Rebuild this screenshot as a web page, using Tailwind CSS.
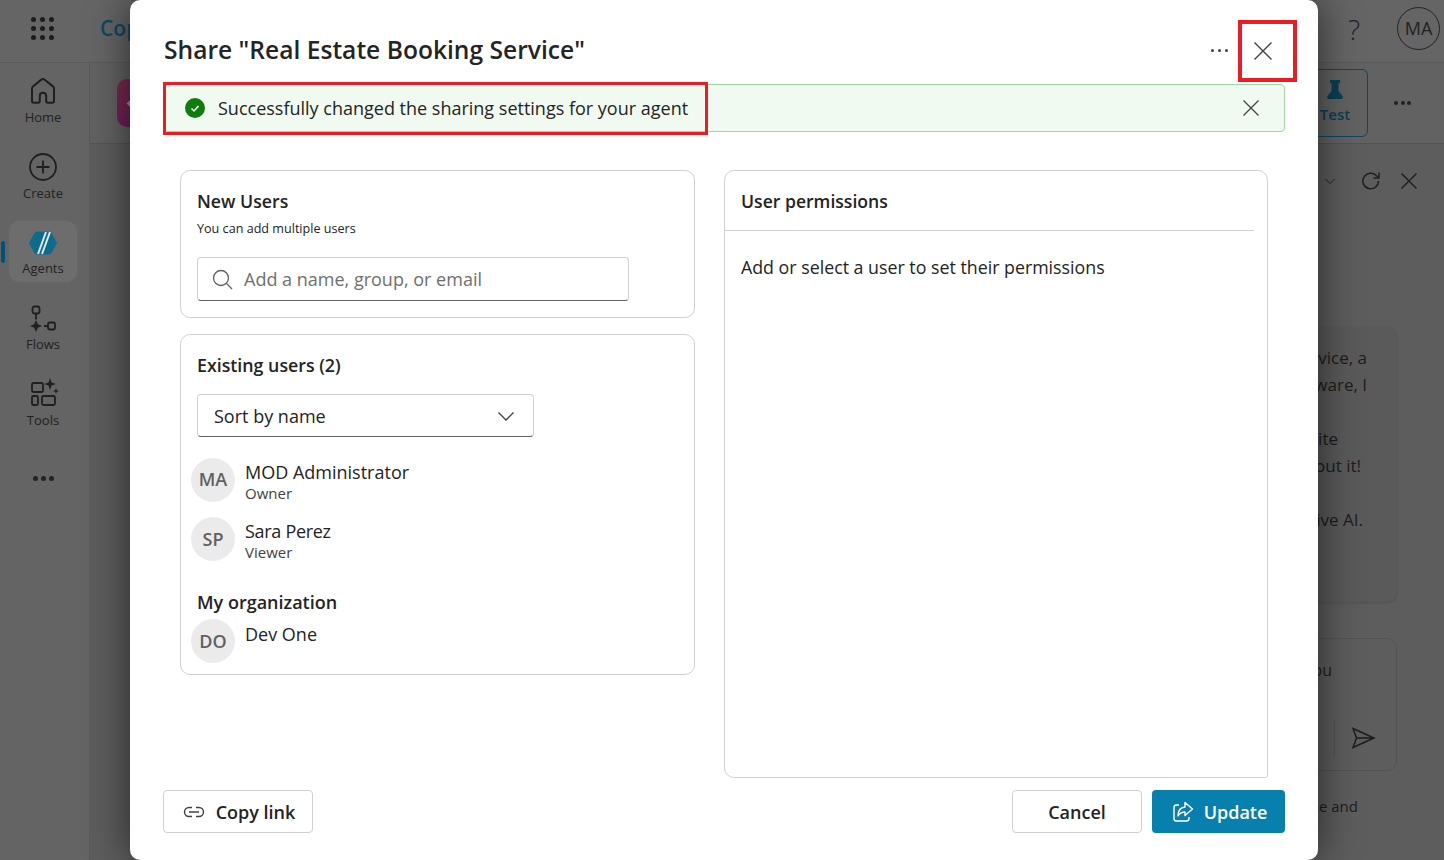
<!DOCTYPE html>
<html lang="en">
<head>
    <meta charset="UTF-8">
    <meta name="viewport" content="width=device-width, initial-scale=1.0">
    <title>Share agent</title>
    <script src="https://cdn.jsdelivr.net/npm/@tailwindcss/browser@4"></script>
</head>
<body class="bg-[#5c5d5c] font-['Open_Sans',sans-serif] text-[#242424]">
<div class="relative w-[1444px] h-[860px] overflow-hidden">

    <!-- App behind the dialog -->
    <div class="flex flex-col h-full">
        <header class="h-[63px] flex items-center bg-[#646564] border-b border-[#5a5b5a] pl-[31px] pr-[4px] pb-[5px] shrink-0">
            <div class="grid grid-cols-3 gap-[4px] w-[23px]">
                <span class="size-[5px] rounded-full bg-[#1c1c1c]"></span><span class="size-[5px] rounded-full bg-[#1c1c1c]"></span><span class="size-[5px] rounded-full bg-[#1c1c1c]"></span>
                <span class="size-[5px] rounded-full bg-[#1c1c1c]"></span><span class="size-[5px] rounded-full bg-[#1c1c1c]"></span><span class="size-[5px] rounded-full bg-[#1c1c1c]"></span>
                <span class="size-[5px] rounded-full bg-[#1c1c1c]"></span><span class="size-[5px] rounded-full bg-[#1c1c1c]"></span><span class="size-[5px] rounded-full bg-[#1c1c1c]"></span>
            </div>
            <span class="ml-[46px] text-[21px] font-semibold text-[#0b4a63]">Cop</span>
            <span class="ml-auto text-[28px] font-light text-[#222]">?</span>
            <span class="ml-[37px] size-[43px] rounded-full border border-[#222] flex items-center justify-center text-[18px] text-[#222]">MA</span>
        </header>
        <div class="flex flex-1 min-h-0">
            <nav class="relative w-[90px] shrink-0 bg-[#636463] border-r border-[#595a59] flex flex-col items-center pt-[13px] pr-[3px] text-[13px] text-[#222]">
                <div class="h-[76px] flex flex-col items-center">
                    <svg class="size-[30px]" viewBox="0 0 30 30" fill="none" stroke="#1f1f1f" stroke-width="2"><path d="M4 25V12.500c0-.9.4-1.600 1-2.100l8-6.500c1.200-1 2.800-1 4 0l8 6.500c.6.5 1 1.200 1 2.100V25c0 1-.8 1.800-1.800 1.800H20c-1 0-1.800-.8-1.800-1.800V20c0-1.800-1.400-3.200-3.200-3.200S11.800 18.200 11.800 20v5c0 1-.8 1.800-1.800 1.800H5.800C4.800 26.800 4 26 4 25z"/></svg>
                    <span class="mt-[2px]">Home</span>
                </div>
                <div class="h-[68px] flex flex-col items-center">
                    <svg class="size-[30px]" viewBox="0 0 30 30" fill="none" stroke="#1f1f1f" stroke-width="1.800"><circle cx="15" cy="15" r="13"/><path d="M15 8.500v13M8.500 15h13"/></svg>
                    <span class="mt-[2px]">Create</span>
                </div>
                <div class="absolute left-[1px] top-[178px] w-[4px] h-[22px] rounded-full bg-[#03507a]"></div>
                <div class="w-[70px] h-[63px] shrink-0 rounded-[12px] bg-[#6c6d6c] border border-[#666766] flex flex-col items-center pt-[10px]">
                    <svg class="w-[28px] h-[24px] shrink-0" viewBox="0 0 28 24"><path d="M7.500 .5h13a2 2 0 0 1 1.700 1l5.300 9.500a2 2 0 0 1 0 2L22.200 22.500a2 2 0 0 1-1.700 1h-13a2 2 0 0 1-1.700-1L.5 13a2 2 0 0 1 0-2L5.800 1.500a2 2 0 0 1 1.700-1z" fill="#0d6c8e"/><path d="M17 1 9 23M21 1l-8 22" stroke="#dfe7ea" stroke-width="2"/></svg>
                    <span class="mt-[4px]">Agents</span>
                </div>
                <div class="h-[72px] mt-[22px] flex flex-col items-center">
                    <svg class="size-[28px] shrink-0" viewBox="0 0 28 28" fill="none" stroke="#1f1f1f" stroke-width="1.800"><rect x="3.500" y="1.500" width="7" height="7" rx="2"/><path d="M7 8.500v6M15 21h4"/><rect x="19" y="17.500" width="7" height="7" rx="2"/><path d="M7 15l1.800 4.200L13 21l-4.200 1.800L7 27l-1.800-4.200L1 21l4.200-1.800z" fill="#1f1f1f" stroke="none"/></svg>
                    <span class="mt-[2px]">Flows</span>
                </div>
                <div class="h-[76px] flex flex-col items-center">
                    <svg class="size-[30px] shrink-0 ml-[3px]" viewBox="0 0 30 30" fill="none" stroke="#1f1f1f" stroke-width="1.800"><rect x="2" y="6" width="11" height="9" rx="1.500"/><rect x="2" y="19" width="6" height="9" rx="1.500"/><rect x="12" y="19" width="13" height="9" rx="1.500"/><path d="M20 1l1.500 4.500L26 7l-4.500 1.500L20 13l-1.500-4.500L14 7l4.500-1.500z" fill="#1f1f1f" stroke="none"/><path d="M26 11l.8 2.200L29 14l-2.200.8L26 17l-.8-2.200L23 14l2.200-.8z" fill="#1f1f1f" stroke="none"/></svg>
                    <span class="mt-[4px]">Tools</span>
                </div>
                <div class="flex gap-[3px] mt-[23px]">
                    <span class="size-[5px] rounded-full bg-[#222]"></span><span class="size-[5px] rounded-full bg-[#222]"></span><span class="size-[5px] rounded-full bg-[#222]"></span>
                </div>
            </nav>
            <main class="flex-1 min-w-0 flex flex-col">
                <div class="h-[81px] shrink-0 border-b border-[#535453] flex items-center pl-[27px] bg-[#616261]">
                    <div class="w-[48px] h-[48px] rounded-[10px] bg-gradient-to-b from-[#7d2a50] to-[#6c1f5a] flex items-center justify-center">
                        <span class="size-[21px] rotate-45 border-2 border-[#b68aa4]"></span>
                    </div>
                    <div class="ml-auto w-[90px] h-[68px] rounded-[6px] border border-[#0b4a63] flex flex-col items-center justify-center text-[15px] font-semibold text-[#0b3f55]">
                        <svg class="size-[22px] ml-[24px] mt-[-1px]" viewBox="0 0 22 22" fill="#0b3f55"><path d="M6 1h10v3h-1.500v8l4 5c.8 1 .4 3-1.500 3H5c-1.900 0-2.300-2-1.500-3l4-5V4H6z"/></svg>
                        <span class="ml-[24px] mt-[2px]">Test</span>
                    </div>
                    <div class="flex gap-[2.500px] ml-[26px] mr-[33px]">
                        <span class="size-[4px] rounded-full bg-[#222]"></span><span class="size-[4px] rounded-full bg-[#222]"></span><span class="size-[4px] rounded-full bg-[#222]"></span>
                    </div>
                </div>
                <div class="flex flex-col items-end pr-[47px] flex-1">
                    <div class="flex items-center h-[74px] mr-[-21px]">
                        <svg class="size-[12px]" viewBox="0 0 12 12" fill="none" stroke="#222"><path d="M1.500 4 6 8.500 10.500 4"/></svg>
                        <svg class="size-[22px] ml-[24px]" viewBox="0 0 22 22" fill="none" stroke="#222" stroke-width="1.500"><path d="M18.500 11a7.800 7.800 0 1 1-2.400-5.600L19 8M19 2.500V8h-5.500"/></svg>
                        <svg class="size-[18px] ml-[18px]" viewBox="0 0 18 18" fill="none" stroke="#222" stroke-width="1.500"><path d="m1.500 1.500 15 15M16.500 1.500l-15 15"/></svg>
                    </div>
                    <div class="mt-[109px] w-[200px] h-[275px] rounded-[10px] bg-[#595a59] shadow-sm pt-[17px] pr-[30px] text-right text-[17px] leading-[27px] text-[#1d1d1d] whitespace-nowrap">
                        <p>service, a</p>
                        <p>software, I</p>
                        <p class="mt-[27px] pr-[29px]">website</p>
                        <p class="pr-[6px]">about it!</p>
                        <p class="mt-[27px] pr-[4px]">generative AI.</p>
                    </div>
                    <div class="relative mt-[36px] w-[200px] h-[133px] rounded-[10px] border border-[#525352] text-[#1d1d1d]">
                        <span class="absolute right-[64px] top-[19px] text-[16px]">you</span>
                        <span class="absolute right-[61px] top-[80px] h-[38px] w-px bg-[#525352]"></span>
                        <svg class="absolute right-[20px] top-[86px] size-[26px]" viewBox="0 0 26 26" fill="none" stroke="#1d1d1d" stroke-width="1.500"><path d="M3 3.500 24 13 3 22.500 6.500 13zM6.500 13H24"/></svg>
                    </div>
                    <p class="mt-[24px] mr-[39px] text-[15px] text-[#1d1d1d]">one and</p>
                </div>
            </main>
        </div>
    </div>

    <!-- Share dialog -->
    <div class="absolute left-[130px] top-0 w-[1188px] h-[860px] bg-white rounded-[10px] shadow-[0_0_40px_rgba(0,0,0,0.6)] pl-[34px] pr-[33px] flex flex-col">
        <div class="h-[84px] shrink-0 flex items-center pt-[16px]">
            <h1 class="text-[24.600px] font-semibold">Share "Real Estate Booking Service"</h1>
            <div class="ml-auto flex gap-[4px] mr-[25px]">
                <span class="size-[3px] rounded-full bg-[#424242]"></span><span class="size-[3px] rounded-full bg-[#424242]"></span><span class="size-[3px] rounded-full bg-[#424242]"></span>
            </div>
            <svg class="size-[20px] mr-[12px] mt-[2px]" viewBox="0 0 20 20" fill="none" stroke="#424242" stroke-width="1.400"><path d="m1.500 1.500 17 17M18.500 1.500l-17 17"/></svg>
        </div>

        <div class="h-[48px] shrink-0 rounded-[4px] bg-[#f1faf1] border border-[#9fd89f] flex items-center pl-[20px] pr-[24px]">
            <span class="size-[20px] rounded-full bg-[#107c10] flex items-center justify-center">
                <svg class="size-[12px]" viewBox="0 0 12 12" fill="none" stroke="#fff" stroke-width="1.500"><path d="m2.500 6.500 2.500 2.500 4.500-5"/></svg>
            </span>
            <span class="ml-[13px] text-[18px]">Successfully changed the sharing settings for your agent</span>
            <svg class="ml-auto size-[18px]" viewBox="0 0 18 18" fill="none" stroke="#424242" stroke-width="1.300"><path d="m1.500 1.500 15 15M16.500 1.500l-15 15"/></svg>
        </div>

        <div class="flex h-[608px] shrink-0 mt-[38px] ml-[16px] gap-[29px]">
            <div class="w-[515px] flex flex-col gap-[16px]">
                <section class="h-[148px] rounded-[10px] border border-[#d1d1d1] px-[16px] pt-[18px]">
                    <h2 class="text-[17.700px] font-semibold leading-[24px]">New Users</h2>
                    <p class="mt-[7px] text-[12.600px] leading-[17px]">You can add multiple users</p>
                    <div class="mt-[20px] w-[432px] h-[44px] rounded-[4px] border border-[#d1d1d1] border-b-[#616161] flex items-center pl-[14px]">
                        <svg class="size-[21px]" viewBox="0 0 21 21" fill="none" stroke="#616161" stroke-width="1.300"><circle cx="9" cy="9" r="7.500"/><path d="m14.500 14.500 5.500 5.500"/></svg>
                        <span class="ml-[11px] text-[18px] text-[#707070]">Add a name, group, or email</span>
                    </div>
                </section>
                <section class="h-[341px] rounded-[10px] border border-[#d1d1d1] px-[16px] pt-[18px]">
                    <h2 class="text-[17.800px] font-semibold leading-[24px]">Existing users (2)</h2>
                    <div class="mt-[17px] w-[337px] h-[43px] rounded-[4px] border border-[#d1d1d1] border-b-[#616161] flex items-center pl-[16px] pr-[18px] pt-[1px] text-[18px]">
                        Sort by name
                        <svg class="ml-auto size-[18px]" viewBox="0 0 18 18" fill="none" stroke="#424242" stroke-width="1.300"><path d="m1.500 5.500 7.500 7.500 7.500-7.500"/></svg>
                    </div>
                    <div class="mt-[21px] ml-[-6px] flex gap-[10px] h-[44px]">
                        <span class="size-[44px] rounded-full bg-[#ebebeb] flex items-center justify-center pb-[1px] text-[18px] font-semibold text-[#616161]">MA</span>
                        <div><p class="text-[18px] leading-[24px] mt-[2px]">MOD Administrator</p><p class="text-[15px] leading-[18px] text-[#424242]">Owner</p></div>
                    </div>
                    <div class="mt-[15px] ml-[-6px] flex gap-[10px] h-[44px]">
                        <span class="size-[44px] rounded-full bg-[#ebebeb] flex items-center justify-center text-[18px] font-semibold text-[#616161]">SP</span>
                        <div><p class="text-[18px] leading-[24px] mt-[2px] tracking-[-0.3px]">Sara Perez</p><p class="text-[15px] leading-[19px] text-[#424242]">Viewer</p></div>
                    </div>
                    <h2 class="mt-[29px] text-[18px] font-semibold leading-[24px]">My organization</h2>
                    <div class="mt-[5px] ml-[-6px] flex gap-[10px] h-[44px]">
                        <span class="size-[44px] rounded-full bg-[#ebebeb] flex items-center justify-center text-[18px] font-semibold text-[#616161]">DO</span>
                        <p class="text-[18px] leading-[24px] mt-[3px]">Dev One</p>
                    </div>
                </section>
            </div>
            <section class="w-[544px] rounded-[10px] rounded-br-[3px] border border-[#d1d1d1] pr-[13px]">
                <h2 class="h-[60px] border-b border-[#d1d1d1] flex items-center pl-[16px] pt-[1px] text-[17.600px] font-semibold">User permissions</h2>
                <p class="mt-[24px] pl-[16px] text-[17.800px] leading-[24px]">Add or select a user to set their permissions</p>
            </section>
        </div>

        <div class="flex mt-[12px] gap-[10px]">
            <button class="w-[150px] h-[43px] rounded-[4px] border border-[#d1d1d1] flex items-center justify-center gap-[11px] pl-[2px] pt-[1px] text-[18px] font-semibold ml-[-1px]">
                <svg class="size-[22px]" viewBox="0 0 22 22" fill="none" stroke="#424242" stroke-width="1.400"><path d="M9 6.500H6a4.500 4.500 0 0 0 0 9h3M13 6.500h3a4.500 4.500 0 0 1 0 9h-3M6 11h10"/></svg>
                Copy link
            </button>
            <button class="ml-auto w-[130px] h-[43px] rounded-[4px] border border-[#d1d1d1] pt-[1px] text-[18px] font-semibold">Cancel</button>
            <button class="w-[133px] h-[43px] rounded-[4px] bg-[#0780ad] text-white flex items-center justify-center gap-[10px] pl-[2px] pt-[1px] text-[18px] font-semibold">
                <svg class="size-[22px]" viewBox="0 0 22 22" fill="none" stroke="#fff" stroke-width="1.400"><path d="M7 4H4.500A2.500 2.500 0 0 0 2 6.500v11A2.500 2.500 0 0 0 4.500 20h10a2.500 2.500 0 0 0 2.500-2.500V16"/><path d="M13 1.500 20.500 8 13 14.500V11c-3.500 0-5.500 1.500-7 4 0-5 2.500-8.500 7-9z" stroke-linejoin="round"/></svg>
                Update
            </button>
        </div>
    </div>

    <!-- Red callouts from the screenshot -->
    <div class="absolute left-[163px] top-[82px] w-[545px] h-[53px] border-[3px] border-[#ed1c24]"></div>
    <div class="absolute left-[1238px] top-[20px] w-[59px] h-[62px] border-[4px] border-[#ed1c24]"></div>
</div>
</body>
</html>
